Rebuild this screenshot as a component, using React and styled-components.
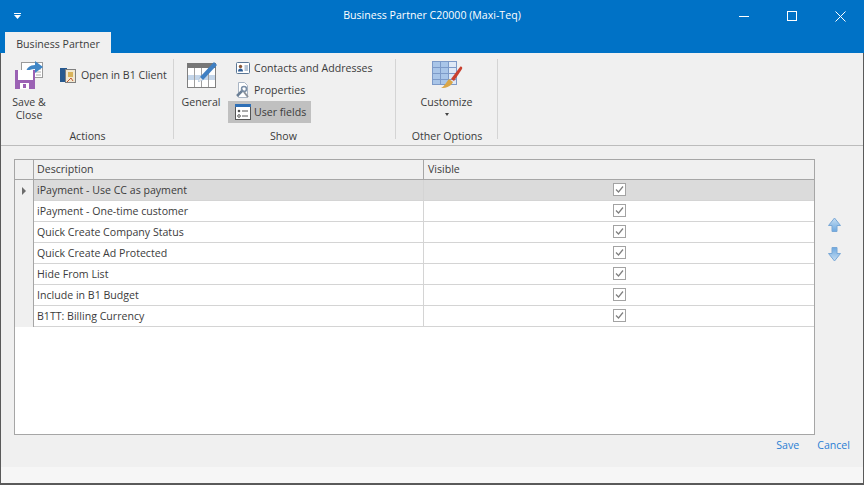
import React from "react"
import styled, { createGlobalStyle } from "styled-components"

const GlobalStyle = createGlobalStyle`
  html, body {
    margin: 0;
    padding: 0;
    overflow: hidden;
  }
  body {
    font-family: "Open Sans", "Liberation Sans", sans-serif;
    font-size: 10.6px;
    color: #3b3b3b;
  }
`

const Window = styled.div`
  width: 864px;
  height: 485px;
  display: flex;
  flex-direction: column;
  background: #f0f0f0;
`

const TitleBar = styled.div`
  height: 32px;
  flex: none;
  box-sizing: border-box;
  padding-bottom: 2px;
  position: relative;
  display: flex;
  align-items: center;
  justify-content: center;
  background: #0072c6;
  color: #fff;
`

const QuickMenu = styled.svg`
  position: absolute;
  left: 14px;
  top: 13px;
`

const WindowButtons = styled.div`
  position: absolute;
  right: 0;
  top: 0;
  display: flex;
`

const WindowButton = styled.div`
  width: 48px;
  height: 32px;
  display: flex;
  align-items: center;
  justify-content: center;
`

const TabStrip = styled.div`
  height: 21px;
  flex: none;
  padding-left: 5px;
  display: flex;
  background: #0072c6;
`

const Tab = styled.div`
  width: 106px;
  padding-top: 2px;
  box-sizing: border-box;
  display: flex;
  align-items: center;
  justify-content: center;
  background: #f0f0f0;
`

const Body = styled.div`
  flex: 1;
  min-height: 0;
  display: flex;
  flex-direction: column;
  border: 1px solid #5a5a5a;
  border-top: 0;
  border-bottom-width: 2px;
`

const Ribbon = styled.div`
  height: 93px;
  flex: none;
  box-sizing: border-box;
  display: flex;
  border-bottom: 1px solid #bcbcbc;
  padding-top: 5px;
`

const Group = styled.div`
  width: ${({ width }) => width}px;
  height: 87px;
  flex: none;
  box-sizing: border-box;
  position: relative;
  display: flex;
  flex-direction: column;
  &:after {
    content: "";
    position: absolute;
    right: 0;
    top: 1px;
    bottom: 6px;
    width: 1px;
    background: #d4d4d4;
  }
`

const GroupBody = styled.div`
  flex: 1;
  display: flex;
`

const GroupLabel = styled.div`
  height: 18px;
  text-align: center;
  line-height: 18px;
  padding-right: ${({ inset }) => inset || 0}px;
`

const LargeButton = styled.div`
  width: ${({ width }) => width}px;
  flex: none;
  display: flex;
  flex-direction: column;
  align-items: center;
  text-align: center;
  line-height: 13px;
`

const LargeIcon = styled.svg`
  flex: none;
  margin-top: 2px;
  margin-bottom: ${({ gap }) => gap}px;
`

const SmallStack = styled.div`
  display: flex;
  flex-direction: column;
  margin-top: ${({ top }) => top || 0}px;
`

const SmallButton = styled.div`
  height: 22px;
  box-sizing: border-box;
  display: flex;
  align-items: center;
  gap: ${({ gap }) => gap || 3}px;
  padding-left: ${({ left }) => left || 7}px;
  width: ${({ width }) => (width ? `${width}px` : "auto")};
  background: ${({ active }) => (active ? "#c0c0c0" : "transparent")};
  white-space: nowrap;
`

const DropCaret = styled.div`
  width: 0;
  height: 0;
  margin-top: 4px;
  border-left: 2.500px solid transparent;
  border-right: 2.500px solid transparent;
  border-top: 3px solid #444;
`

const Content = styled.div`
  flex: 1;
  display: flex;
  flex-direction: column;
  padding: 13px 13px 0;
`

const GridRow = styled.div`
  display: flex;
`

const Grid = styled.div`
  width: 801px;
  height: 276px;
  flex: none;
  box-sizing: border-box;
  background: #fff;
  border: 1px solid #a6a6a6;
`

const Row = styled.div`
  height: ${({ header }) => (header ? 20 : 21)}px;
  box-sizing: border-box;
  display: grid;
  grid-template-columns: 19px 390px 1fr;
  background: ${({ header, selected }) =>
    header ? "#f0f0f0" : selected ? "#dbdbdb" : "#fff"};
  border-bottom: 1px solid ${({ header }) => (header ? "#a6a6a6" : "#d4d4d4")};
`

const Indicator = styled.div`
  background: #f0f0f0;
  border-right: 1px solid #a6a6a6;
  display: flex;
  align-items: center;
  justify-content: center;
`

const Pointer = styled.div`
  width: 0;
  height: 0;
  border-top: 4px solid transparent;
  border-bottom: 4px solid transparent;
  border-left: 4px solid #6d6d6d;
`

const Cell = styled.div`
  padding-left: 3px;
  line-height: ${({ header }) => (header ? 19 : 21)}px;
  border-right: 1px solid ${({ header }) => (header ? "#a6a6a6" : "#d4d4d4")};
  white-space: nowrap;
`

const CheckCell = styled.div`
  display: flex;
  align-items: center;
  justify-content: center;
  padding-bottom: 2px;
`

const HeaderCell = styled.div`
  padding-left: 4px;
  line-height: 19px;
`

const MoveButtons = styled.div`
  display: flex;
  flex-direction: column;
  gap: 15px;
  margin-left: 13px;
  padding-top: 58px;
`

const Footer = styled.div`
  display: flex;
  justify-content: flex-end;
  gap: 18px;
  padding-top: 3px;
  color: #2a7fd4;
  line-height: 14px;
`

const BottomStrip = styled.div`
  height: 16px;
  flex: none;
  background: #f6f6f6;
`

const SaveIcon = () => (
  <LargeIcon width="32" height="32" viewBox="0 0 32 32" gap={4}>
    <rect x="8.500" y="2.500" width="21" height="15" fill="#fff" stroke="#9a9a9a" />
    <path d="M23 9h5M23 12h5M23 15h5" stroke="#aaa" />
    <path d="M13 13c0-5 4-8 9-8V1l8 6-8 6V9c-4 0-7 1-9 4z" fill="#3f86c6" />
    <path d="M2 10h20v19H2z" fill="#9b62b4" />
    <rect x="5" y="10" width="15" height="10" fill="#fff" />
    <rect x="7" y="23" width="9" height="6" fill="#fff" />
    <rect x="10" y="24" width="3" height="4" fill="#9b62b4" />
  </LargeIcon>
)

const GeneralIcon = () => (
  <LargeIcon width="32" height="32" viewBox="0 0 32 32" gap={4}>
    <rect x="2.500" y="3.500" width="28" height="24" fill="#fff" stroke="#808080" />
    <rect x="2" y="3" width="29" height="5" fill="#777" />
    <rect x="3" y="15" width="27" height="5" fill="#c4d6ea" />
    <path d="M9.500 8v19M16.500 8v19M23.500 8v19" stroke="#a0a0a0" />
    <path d="M15 17l-2 5 5-2L32 5l-3-3z" fill="#3f7fc2" />
    <path d="M15 17l-2 5 5-2z" fill="#e6e6e6" />
  </LargeIcon>
)

const CustomizeIcon = () => (
  <LargeIcon width="32" height="32" viewBox="0 0 32 32" gap={4}>
    <rect x="1.500" y="1.500" width="24" height="23" fill="#dfe9f6" stroke="#7d9ac8" />
    <rect x="2" y="2" width="15" height="22" fill="#a9c5e8" />
    <path d="M9.500 2v22M17.500 2v22M2 7.500h23M2 13.500h23M2 19.500h23" stroke="#7d9ac8" />
    <path d="M20 19L29 7c1-1 3 0 2 2l-8 12z" fill="#c9402f" />
    <path d="M18 19l4 3c-2 4-6 6-12 6 4-2 5-6 8-9z" fill="#d9a648" />
  </LargeIcon>
)

const OpenIcon = () => (
  <svg width="16" height="17" viewBox="0 0 16 17">
    <rect x="0" y="1" width="7" height="14" fill="#27598f" />
    <rect x="5.500" y="2.500" width="10" height="13" fill="#f1e7cf" stroke="#7f7f7f" />
    <rect x="8" y="5" width="5" height="5" fill="#d9b35a" />
    <path d="M7 15l4-4 2 3" stroke="#c0562f" fill="none" />
  </svg>
)

const ContactsIcon = () => (
  <svg width="16" height="16" viewBox="0 0 16 16">
    <rect x="1.500" y="2.500" width="13" height="11" rx="1" fill="#fff" stroke="#5b7795" />
    <circle cx="5.500" cy="6.500" r="1.700" fill="#8a5a3c" />
    <path d="M3 11.500c0-2 1-3 2.500-3s2.500 1 2.500 3z" fill="#2e5d96" />
    <path d="M9.500 6h3.500M9.500 8h3.500M9.500 10h3.500" stroke="#6b87a6" />
  </svg>
)

const PropertiesIcon = () => (
  <svg width="16" height="17" viewBox="0 0 16 17">
    <path d="M3.500 .5h6l3 3v12h-9z" fill="#fff" stroke="#a9b5c4" />
    <path d="M2 14l6-6" stroke="#6b7f95" strokeWidth="2.500" />
    <circle cx="9" cy="7" r="2.500" fill="none" stroke="#7a8ea6" strokeWidth="1.500" />
    <path d="M9 10l4 5" stroke="#8b9199" strokeWidth="2" />
  </svg>
)

const UserFieldsIcon = () => (
  <svg width="16" height="16" viewBox="0 0 16 16">
    <rect x=".5" y=".5" width="15" height="15" fill="#fff" stroke="#555" />
    <rect x="0" y="0" width="16" height="3" fill="#2f70b7" />
    <circle cx="4" cy="7" r="1.300" fill="#555" />
    <circle cx="4" cy="12" r="1.300" fill="none" stroke="#555" />
    <path d="M7 7h6M7 12h6" stroke="#555" />
  </svg>
)

const Checkbox = () => (
  <svg width="13" height="13" viewBox="0 0 13 13">
    <rect x=".5" y=".5" width="12" height="12" fill="#fff" stroke="#a3a3a3" />
    <path d="M3 6.500l2.500 2.500L10 3.500" fill="none" stroke="#7f7f7f" strokeWidth="1.200" />
  </svg>
)

const ArrowIcon = ({ down }) => (
  <svg width="13" height="15" viewBox="0 0 13 15">
    <defs>
      <linearGradient id={down ? "arrowDown" : "arrowUp"} x1="0" y1="0" x2="0" y2="1">
        <stop offset="0" stopColor={down ? "#6ea9e0" : "#c6def3"} />
        <stop offset="1" stopColor={down ? "#c6def3" : "#6ea9e0"} />
      </linearGradient>
    </defs>
    <path
      d={down ? "M4 .5h5v6h3.500L6.500 14 .5 6.500H4z" : "M4 14.500h5v-6h3.500L6.500 1 .5 8.500H4z"}
      fill={`url(#${down ? "arrowDown" : "arrowUp"})`}
      stroke="#7aa8d6"
    />
  </svg>
)

const fields = [
  "iPayment - Use CC as payment",
  "iPayment - One-time customer",
  "Quick Create Company Status",
  "Quick Create Ad Protected",
  "Hide From List",
  "Include in B1 Budget",
  "B1TT: Billing Currency",
]

const App = () => (
  <>
    <GlobalStyle />
    <Window>
      <TitleBar>
        <QuickMenu width="7" height="6" viewBox="0 0 7 6">
          <path d="M0 0h7v1H0zM0 2h7L3.500 6z" fill="#fff" />
        </QuickMenu>
        Business Partner C20000 (Maxi-Teq)
        <WindowButtons>
          <WindowButton>
            <svg width="10" height="10" viewBox="0 0 10 10">
              <path d="M0 5.500h10" stroke="#fff" />
            </svg>
          </WindowButton>
          <WindowButton>
            <svg width="10" height="10" viewBox="0 0 10 10">
              <rect x=".5" y=".5" width="9" height="9" fill="none" stroke="#fff" />
            </svg>
          </WindowButton>
          <WindowButton>
            <svg width="11" height="11" viewBox="0 0 11 11">
              <path d="M.5 .5l10 10M10.500 .5l-10 10" stroke="#fff" />
            </svg>
          </WindowButton>
        </WindowButtons>
      </TitleBar>
      <TabStrip>
        <Tab>Business Partner</Tab>
      </TabStrip>
      <Body>
        <Ribbon>
          <Group width={173}>
            <GroupBody>
              <LargeButton width={56}>
                <SaveIcon />
                Save &amp;
                <br />
                Close
              </LargeButton>
              <SmallStack top={6}>
                <SmallButton left={3} gap={5}>
                  <OpenIcon />
                  Open in B1 Client
                </SmallButton>
              </SmallStack>
            </GroupBody>
            <GroupLabel>Actions</GroupLabel>
          </Group>
          <Group width={222}>
            <GroupBody>
              <LargeButton width={54}>
                <GeneralIcon />
                General
              </LargeButton>
              <SmallStack top={-1}>
                <SmallButton>
                  <ContactsIcon />
                  Contacts and Addresses
                </SmallButton>
                <SmallButton>
                  <PropertiesIcon />
                  Properties
                </SmallButton>
                <SmallButton active width={83}>
                  <UserFieldsIcon />
                  User fields
                </SmallButton>
              </SmallStack>
            </GroupBody>
            <GroupLabel inset={3}>Show</GroupLabel>
          </Group>
          <Group width={102}>
            <GroupBody>
              <LargeButton width={101}>
                <CustomizeIcon />
                Customize
                <DropCaret />
              </LargeButton>
            </GroupBody>
            <GroupLabel>Other Options</GroupLabel>
          </Group>
        </Ribbon>
        <Content>
          <GridRow>
            <Grid>
              <Row header>
                <Indicator />
                <Cell header>Description</Cell>
                <HeaderCell>Visible</HeaderCell>
              </Row>
              {fields.map((name, i) => (
                <Row key={name} selected={i === 0}>
                  <Indicator>{i === 0 && <Pointer />}</Indicator>
                  <Cell>{name}</Cell>
                  <CheckCell>
                    <Checkbox />
                  </CheckCell>
                </Row>
              ))}
            </Grid>
            <MoveButtons>
              <ArrowIcon />
              <ArrowIcon down />
            </MoveButtons>
          </GridRow>
          <Footer>
            <span>Save</span>
            <span>Cancel</span>
          </Footer>
        </Content>
        <BottomStrip />
      </Body>
    </Window>
  </>
)

export default App
